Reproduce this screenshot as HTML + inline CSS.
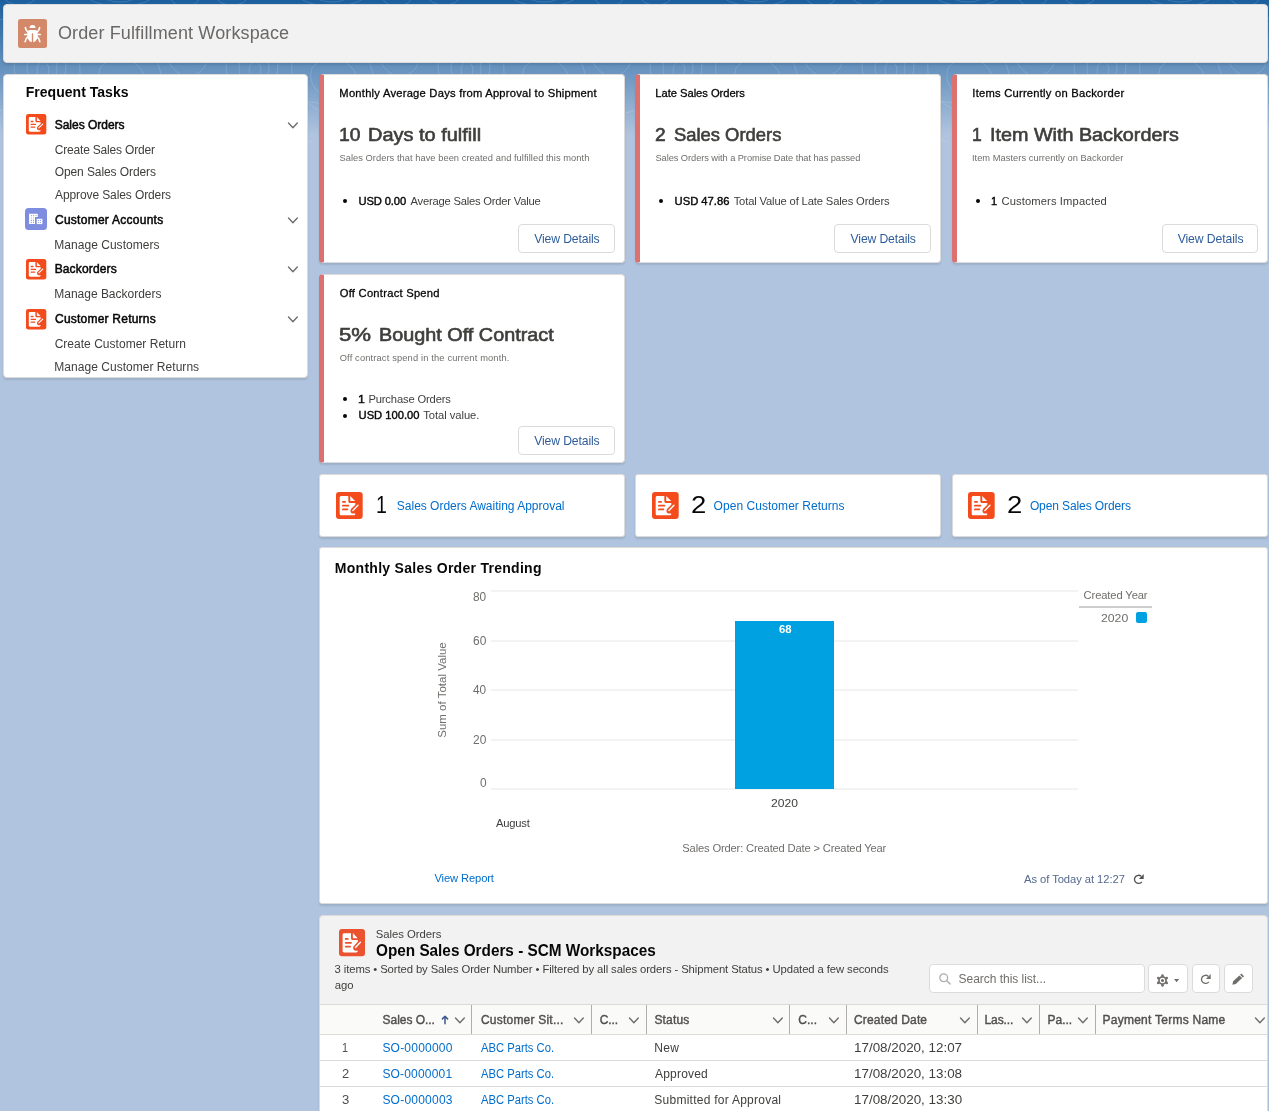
<!DOCTYPE html>
<html lang="en">
<head>
<meta charset="utf-8">
<title>Order Fulfillment Workspace</title>
<style>
*{box-sizing:border-box;margin:0;padding:0}
html,body{width:1269px;height:1111px;overflow:hidden}
body{will-change:transform;font-family:"Liberation Sans",Arial,sans-serif;font-size:12px;color:#080707;background:#b0c4df;position:relative}
.bg{position:absolute;left:0;top:0;width:1269px;height:170px;overflow:hidden;background:linear-gradient(to bottom,#1b5f9e 0,#b0c4df 135px)}
.topo{-webkit-mask-image:linear-gradient(to bottom,#000 0,#000 80%,transparent 100%);mask-image:linear-gradient(to bottom,#000 0,#000 80%,transparent 100%)}
a{text-decoration:none}
h1,h2,h3,p,b,span{font-weight:400;font-style:normal}
i{font-style:normal;display:block;position:absolute}
.t{position:absolute;white-space:nowrap;transform-origin:0 50%;display:block}
svg{position:absolute;display:block;overflow:visible}
.card{position:absolute;background:#fff;border-radius:4px;box-shadow:0 2px 2px 0 rgba(0,0,0,.10);border:1px solid #dddbda}
#hdr{background:#f3f2f2}
#hdr .ico{left:14px;top:14px;width:29px;height:29px}
.kpi{border-left:5px solid #dd716f}
.kpi .dot{width:4px;height:4px;border-radius:50%;background:#080707}
.kpi .btn{position:absolute;width:97px;height:29px;border:1px solid #dddbda;border-radius:4px;background:#fff}
#chart .g{left:171px;width:587px;height:2px;background:#f3f3f3}
#chart .bar{left:415px;top:73px;width:99px;height:168px;background:#00a1e0}
#chart .yt{left:61.6px;top:135px;width:120px;text-align:center;font-size:11.500px;line-height:14px;color:#706e6b;transform:rotate(-90deg);transform-origin:50% 50%}
#chart .lgl{left:759px;top:58px;width:73px;height:2px;background:#cfcdcb}
#chart .lgs{left:816px;top:64.4px;width:11px;height:11px;border-radius:2px;background:#00a1e0}
#list{background:#f3f2f2;border-bottom-left-radius:0;border-bottom-right-radius:0;overflow:hidden}
#list .search{position:absolute;border:1px solid #dddbda;border-radius:4px;background:#fff}
#list .ib{position:absolute;top:48px;height:29px;border:1px solid #dddbda;border-radius:4px;background:#fff}
#list .thead{position:absolute;left:0;width:947px;height:31px;background:#fafaf9;border-top:1px solid #dddbda;border-bottom:1px solid #dddbda}
#list .row{position:absolute;left:0;width:947px;height:26px;background:#fff;border-bottom:1px solid #dddbda}
#list .sep{top:89px;width:1px;height:29px;background:#b0adab}
.tile{border-radius:3px}
#chart{border-radius:3px}

</style>
</head>
<body>
<div class="bg"><svg class="topo" width="1269" height="170" viewBox="0 0 1269 170"><g fill="none" stroke="#fff" stroke-width="1" stroke-opacity=".15"><g transform="translate(0 0)"><ellipse cx="40" cy="66" rx="26" ry="30"/><ellipse cx="42" cy="68" rx="15" ry="18"/><ellipse cx="43" cy="70" rx="6" ry="8"/><ellipse cx="120" cy="-6" rx="34" ry="12"/><ellipse cx="120" cy="-8" rx="20" ry="10"/><ellipse cx="20" cy="-4" rx="16" ry="9"/><ellipse cx="185" cy="-2" rx="14" ry="8"/><path d="M0 20c30-14 60 10 90-4s60-18 122 4M0 110c40 12 70-16 110-6s70 18 102 6M80 60c14-20 50-24 70-6s12 50-14 58-60-12-56-52zM100 68c10-12 30-12 40 0s4 28-12 30-34-10-28-30zM170 40c12-10 30-6 36 8s-6 30-20 28-26-22-16-36zM150 5c20 10 40 8 62 0M10 140c30-12 60-8 90 2"/></g><g transform="translate(212 0)"><ellipse cx="40" cy="66" rx="26" ry="30"/><ellipse cx="42" cy="68" rx="15" ry="18"/><ellipse cx="43" cy="70" rx="6" ry="8"/><ellipse cx="120" cy="-6" rx="34" ry="12"/><ellipse cx="120" cy="-8" rx="20" ry="10"/><ellipse cx="20" cy="-4" rx="16" ry="9"/><ellipse cx="185" cy="-2" rx="14" ry="8"/><path d="M0 20c30-14 60 10 90-4s60-18 122 4M0 110c40 12 70-16 110-6s70 18 102 6M80 60c14-20 50-24 70-6s12 50-14 58-60-12-56-52zM100 68c10-12 30-12 40 0s4 28-12 30-34-10-28-30zM170 40c12-10 30-6 36 8s-6 30-20 28-26-22-16-36zM150 5c20 10 40 8 62 0M10 140c30-12 60-8 90 2"/></g><g transform="translate(424 0)"><ellipse cx="40" cy="66" rx="26" ry="30"/><ellipse cx="42" cy="68" rx="15" ry="18"/><ellipse cx="43" cy="70" rx="6" ry="8"/><ellipse cx="120" cy="-6" rx="34" ry="12"/><ellipse cx="120" cy="-8" rx="20" ry="10"/><ellipse cx="20" cy="-4" rx="16" ry="9"/><ellipse cx="185" cy="-2" rx="14" ry="8"/><path d="M0 20c30-14 60 10 90-4s60-18 122 4M0 110c40 12 70-16 110-6s70 18 102 6M80 60c14-20 50-24 70-6s12 50-14 58-60-12-56-52zM100 68c10-12 30-12 40 0s4 28-12 30-34-10-28-30zM170 40c12-10 30-6 36 8s-6 30-20 28-26-22-16-36zM150 5c20 10 40 8 62 0M10 140c30-12 60-8 90 2"/></g><g transform="translate(636 0)"><ellipse cx="40" cy="66" rx="26" ry="30"/><ellipse cx="42" cy="68" rx="15" ry="18"/><ellipse cx="43" cy="70" rx="6" ry="8"/><ellipse cx="120" cy="-6" rx="34" ry="12"/><ellipse cx="120" cy="-8" rx="20" ry="10"/><ellipse cx="20" cy="-4" rx="16" ry="9"/><ellipse cx="185" cy="-2" rx="14" ry="8"/><path d="M0 20c30-14 60 10 90-4s60-18 122 4M0 110c40 12 70-16 110-6s70 18 102 6M80 60c14-20 50-24 70-6s12 50-14 58-60-12-56-52zM100 68c10-12 30-12 40 0s4 28-12 30-34-10-28-30zM170 40c12-10 30-6 36 8s-6 30-20 28-26-22-16-36zM150 5c20 10 40 8 62 0M10 140c30-12 60-8 90 2"/></g><g transform="translate(848 0)"><ellipse cx="40" cy="66" rx="26" ry="30"/><ellipse cx="42" cy="68" rx="15" ry="18"/><ellipse cx="43" cy="70" rx="6" ry="8"/><ellipse cx="120" cy="-6" rx="34" ry="12"/><ellipse cx="120" cy="-8" rx="20" ry="10"/><ellipse cx="20" cy="-4" rx="16" ry="9"/><ellipse cx="185" cy="-2" rx="14" ry="8"/><path d="M0 20c30-14 60 10 90-4s60-18 122 4M0 110c40 12 70-16 110-6s70 18 102 6M80 60c14-20 50-24 70-6s12 50-14 58-60-12-56-52zM100 68c10-12 30-12 40 0s4 28-12 30-34-10-28-30zM170 40c12-10 30-6 36 8s-6 30-20 28-26-22-16-36zM150 5c20 10 40 8 62 0M10 140c30-12 60-8 90 2"/></g><g transform="translate(1060 0)"><ellipse cx="40" cy="66" rx="26" ry="30"/><ellipse cx="42" cy="68" rx="15" ry="18"/><ellipse cx="43" cy="70" rx="6" ry="8"/><ellipse cx="120" cy="-6" rx="34" ry="12"/><ellipse cx="120" cy="-8" rx="20" ry="10"/><ellipse cx="20" cy="-4" rx="16" ry="9"/><ellipse cx="185" cy="-2" rx="14" ry="8"/><path d="M0 20c30-14 60 10 90-4s60-18 122 4M0 110c40 12 70-16 110-6s70 18 102 6M80 60c14-20 50-24 70-6s12 50-14 58-60-12-56-52zM100 68c10-12 30-12 40 0s4 28-12 30-34-10-28-30zM170 40c12-10 30-6 36 8s-6 30-20 28-26-22-16-36zM150 5c20 10 40 8 62 0M10 140c30-12 60-8 90 2"/></g></g></svg></div>
<header class="card" id="hdr" style="left:3px;top:4px;width:1265px;height:59px">
  <svg class="ico" viewBox="0 0 29 29"><rect width="29" height="29" rx="2.500" fill="#d4886a"/><path fill="#fff" d="M11.500 9.100a3 3.200 0 0 1 6 0z"/><path fill="#fff" d="M9.400 13.500c0-1.500 1.100-2.500 2.600-2.500h5c1.500 0 2.600 1 2.600 2.500v3.700c0 2.800-1.700 5.300-4.400 6.100V14.900c0-.4-.3-.7-.7-.7s-.7.300-.7.700v8.400c-2.700-.8-4.400-3.300-4.400-6.100z"/><path fill="none" stroke="#fff" stroke-width="1.700" stroke-linecap="round" d="M9.900 13C8.300 11.900 7.500 10.300 7.400 8.500M19.100 13c1.600-1.100 2.400-2.700 2.500-4.500M9.400 15.500H6.800M19.600 15.500h2.600M9.900 18c-1.700 1-2.600 2.600-2.700 4.600M19.100 18c1.700 1 2.600 2.600 2.700 4.600"/></svg>
  <h1 class="t" style="top:16.90px;font-size:18px;line-height:23px;color:#6a6866;left:53.90px;letter-spacing:0.135px;">Order Fulfillment Workspace</h1>
</header>
<nav class="card" id="left" style="left:3px;top:74px;width:305px;height:304px">
  <h2 class="t" style="top:8.20px;font-size:14px;line-height:18px;font-weight:700;color:#080707;left:21.70px;letter-spacing:0.030px;">Frequent Tasks</h2>
  <svg class="ic" style="left:22.0px;top:38.8px;width:20.3px;height:20.5px" viewBox="0 0 26 27" preserveAspectRatio="none"><rect width="26" height="27" rx="3" fill="#f44b1c"/><path fill="#fff" d="M5.2 4.1h6.8v5.100c0 1 .8 1.800 1.800 1.800h5v1.700l-3.700 3.900c-1 1-1.200 2.300-.8 3.300c.4 1 1.300 1.600 2.400 1.600h2.100v.2c0 .9-.7 1.600-1.600 1.600H5.200c-.9 0-1.600-.7-1.600-1.600V5.700c0-.9.7-1.600 1.600-1.600z"/><path fill="#fff" d="M13.900 4l4.700 5.100h-4c-.4 0-.7-.3-.7-.7z"/><path stroke="#f44b1c" stroke-width="1.700" stroke-linecap="round" d="M6.700 9.900h2.200M6.700 13.700h5.400M6.700 17.400h4.400"/><path d="M16.500 18.400l4.900-5.200" stroke="#fff" stroke-width="1.400" stroke-linecap="round" fill="none"/></svg>
  <h3 class="t" style="top:42.00px;font-size:12px;line-height:16px;color:#080707;-webkit-text-stroke:0.5px #080707;left:50.65px;letter-spacing:-0.007px;">Sales Orders</h3>
  <svg class="chev" style="left:283.1px;top:47.0px" width="12" height="8" viewBox="0 0 12 8"><path d="M1.500 1.100l4.400 4.600 4.400-4.600" fill="none" stroke="#706e6b" stroke-width="1.400" stroke-linecap="round" stroke-linejoin="round"/></svg>
  <a class="t" style="top:67.20px;font-size:12px;line-height:16px;color:#3e3e3c;left:50.66px;letter-spacing:-0.174px;">Create Sales Order</a>
  <a class="t" style="top:89.10px;font-size:12px;line-height:16px;color:#3e3e3c;left:50.70px;letter-spacing:-0.089px;">Open Sales Orders</a>
  <a class="t" style="top:112.00px;font-size:12px;line-height:16px;color:#3e3e3c;left:51.06px;letter-spacing:-0.107px;">Approve Sales Orders</a>
  <svg class="ic" style="left:21px;top:133.0px;width:22px;height:22px" viewBox="0 0 22 22" preserveAspectRatio="none"><rect width="22" height="22" rx="3.500" fill="#7f8de1"/><path fill="#fff" d="M4.100 5.800h8.700v3.200h-2.800v7.100H4.100z"/><rect x="11.700" y="10.800" width="5.700" height="5.300" fill="#fff"/><g fill="#7f8de1"><circle cx="6.300" cy="7.500" r=".55"/><circle cx="8.400" cy="7.500" r=".55"/><circle cx="11.100" cy="7.500" r=".55"/><circle cx="6.300" cy="12.400" r=".55"/><circle cx="8.400" cy="12.400" r=".55"/><circle cx="6.300" cy="14.400" r=".55"/><circle cx="8.400" cy="14.400" r=".55"/><circle cx="13.300" cy="12.400" r=".55"/><circle cx="15.400" cy="12.400" r=".55"/><circle cx="13.300" cy="14.500" r=".55"/><circle cx="15.400" cy="14.500" r=".55"/><rect x="6" y="8.500" width=".6" height="3" opacity=".5"/><rect x="8.100" y="8.500" width=".6" height="3" opacity=".5"/></g></svg>
  <h3 class="t" style="top:136.80px;font-size:12px;line-height:16px;color:#080707;-webkit-text-stroke:0.5px #080707;left:51.01px;letter-spacing:0.257px;">Customer Accounts</h3>
  <svg class="chev" style="left:283.1px;top:141.8px" width="12" height="8" viewBox="0 0 12 8"><path d="M1.500 1.100l4.400 4.600 4.400-4.600" fill="none" stroke="#706e6b" stroke-width="1.400" stroke-linecap="round" stroke-linejoin="round"/></svg>
  <a class="t" style="top:162.10px;font-size:12px;line-height:16px;color:#3e3e3c;left:50.30px;letter-spacing:0.031px;">Manage Customers</a>
  <svg class="ic" style="left:22.0px;top:183.7px;width:20.3px;height:20.5px" viewBox="0 0 26 27" preserveAspectRatio="none"><rect width="26" height="27" rx="3" fill="#f44b1c"/><path fill="#fff" d="M5.2 4.1h6.8v5.100c0 1 .8 1.800 1.800 1.800h5v1.700l-3.700 3.900c-1 1-1.200 2.300-.8 3.300c.4 1 1.300 1.600 2.400 1.600h2.100v.2c0 .9-.7 1.600-1.600 1.600H5.200c-.9 0-1.600-.7-1.600-1.600V5.700c0-.9.7-1.600 1.600-1.600z"/><path fill="#fff" d="M13.900 4l4.700 5.100h-4c-.4 0-.7-.3-.7-.7z"/><path stroke="#f44b1c" stroke-width="1.700" stroke-linecap="round" d="M6.700 9.900h2.200M6.700 13.700h5.400M6.700 17.400h4.400"/><path d="M16.500 18.400l4.900-5.200" stroke="#fff" stroke-width="1.400" stroke-linecap="round" fill="none"/></svg>
  <h3 class="t" style="top:186.10px;font-size:12px;line-height:16px;color:#080707;-webkit-text-stroke:0.5px #080707;left:50.65px;letter-spacing:0.152px;">Backorders</h3>
  <svg class="chev" style="left:283.1px;top:191.1px" width="12" height="8" viewBox="0 0 12 8"><path d="M1.500 1.100l4.400 4.600 4.400-4.600" fill="none" stroke="#706e6b" stroke-width="1.400" stroke-linecap="round" stroke-linejoin="round"/></svg>
  <a class="t" style="top:210.80px;font-size:12px;line-height:16px;color:#3e3e3c;left:50.30px;letter-spacing:-0.016px;">Manage Backorders</a>
  <svg class="ic" style="left:22.0px;top:233.5px;width:20.3px;height:20.5px" viewBox="0 0 26 27" preserveAspectRatio="none"><rect width="26" height="27" rx="3" fill="#f44b1c"/><path fill="#fff" d="M5.2 4.1h6.8v5.100c0 1 .8 1.800 1.800 1.800h5v1.700l-3.700 3.900c-1 1-1.200 2.300-.8 3.300c.4 1 1.300 1.600 2.400 1.600h2.100v.2c0 .9-.7 1.600-1.600 1.600H5.200c-.9 0-1.600-.7-1.600-1.600V5.700c0-.9.7-1.600 1.600-1.600z"/><path fill="#fff" d="M13.900 4l4.700 5.100h-4c-.4 0-.7-.3-.7-.7z"/><path stroke="#f44b1c" stroke-width="1.700" stroke-linecap="round" d="M6.700 9.900h2.200M6.700 13.700h5.400M6.700 17.400h4.400"/><path d="M16.500 18.400l4.900-5.200" stroke="#fff" stroke-width="1.400" stroke-linecap="round" fill="none"/></svg>
  <h3 class="t" style="top:236.00px;font-size:12px;line-height:16px;color:#080707;-webkit-text-stroke:0.5px #080707;left:51.01px;letter-spacing:0.222px;">Customer Returns</h3>
  <svg class="chev" style="left:283.1px;top:241.0px" width="12" height="8" viewBox="0 0 12 8"><path d="M1.500 1.100l4.400 4.600 4.400-4.600" fill="none" stroke="#706e6b" stroke-width="1.400" stroke-linecap="round" stroke-linejoin="round"/></svg>
  <a class="t" style="top:261.00px;font-size:12px;line-height:16px;color:#3e3e3c;left:50.66px;letter-spacing:0.023px;">Create Customer Return</a>
  <a class="t" style="top:284.00px;font-size:12px;line-height:16px;color:#3e3e3c;left:50.30px;letter-spacing:0.033px;">Manage Customer Returns</a>
</nav>
<section class="card kpi" style="left:319px;top:74px;width:306px;height:189px">
  <h2 class="t" style="top:11.00px;font-size:11.2px;line-height:15px;color:#080707;-webkit-text-stroke:0.3px #080707;left:15.35px;letter-spacing:0.236px;">Monthly Average Days from Approval to Shipment</h2>
  <span class="t" style="top:48.00px;font-size:18.2px;line-height:24px;color:#3e3e3c;-webkit-text-stroke:0.6px #3e3e3c;left:15.03px;transform:scaleX(1.0609);">10</span>
  <span class="t" style="top:48.00px;font-size:18.2px;line-height:24px;color:#3e3e3c;-webkit-text-stroke:0.6px #3e3e3c;left:44.19px;transform:scaleX(1.0970);">Days to fulfill</span>
  <p class="t" style="top:77.00px;font-size:9.3px;line-height:12px;color:#706e6b;left:15.44px;letter-spacing:0.048px;">Sales Orders that have been created and fulfilled this month</p>
  <i class="dot" style="left:19.4px;top:124.2px"></i>
  <b class="t" style="top:118.70px;font-size:11.2px;line-height:15px;color:#080707;-webkit-text-stroke:0.4px #080707;left:34.55px;letter-spacing:-0.132px;">USD 0.00</b>
  <span class="t" style="top:118.70px;font-size:11.2px;line-height:15px;color:#3e3e3c;left:86.46px;letter-spacing:-0.205px;">Average Sales Order Value</span>
  <span class="btn" style="left:194px;top:149px"></span>
  <a class="t" style="top:155.60px;font-size:12.2px;line-height:16px;color:#2f5d9b;left:210.14px;letter-spacing:-0.115px;">View Details</a>
</section>
<section class="card kpi" style="left:635px;top:74px;width:306px;height:189px">
  <h2 class="t" style="top:11.00px;font-size:11.2px;line-height:15px;color:#080707;-webkit-text-stroke:0.3px #080707;left:15.34px;letter-spacing:-0.037px;">Late Sales Orders</h2>
  <span class="t" style="top:48.00px;font-size:18.2px;line-height:24px;color:#3e3e3c;-webkit-text-stroke:0.6px #3e3e3c;left:15.46px;transform:scaleX(1.0563);">2</span>
  <span class="t" style="top:48.00px;font-size:18.2px;line-height:24px;color:#3e3e3c;-webkit-text-stroke:0.6px #3e3e3c;left:33.95px;transform:scaleX(1.0112);">Sales Orders</span>
  <p class="t" style="top:77.00px;font-size:9.3px;line-height:12px;color:#706e6b;left:15.44px;letter-spacing:-0.070px;">Sales Orders with a Promise Date that has passed</p>
  <i class="dot" style="left:19.4px;top:124.2px"></i>
  <b class="t" style="top:118.70px;font-size:11.2px;line-height:15px;color:#080707;-webkit-text-stroke:0.4px #080707;left:34.55px;letter-spacing:0.020px;">USD 47.86</b>
  <span class="t" style="top:118.70px;font-size:11.2px;line-height:15px;color:#3e3e3c;left:93.65px;letter-spacing:-0.139px;">Total Value of Late Sales Orders</span>
  <span class="btn" style="left:194px;top:149px"></span>
  <a class="t" style="top:155.60px;font-size:12.2px;line-height:16px;color:#2f5d9b;left:210.54px;letter-spacing:-0.133px;">View Details</a>
</section>
<section class="card kpi" style="left:952px;top:74px;width:316px;height:189px">
  <h2 class="t" style="top:11.00px;font-size:11.2px;line-height:15px;color:#080707;-webkit-text-stroke:0.3px #080707;left:15.30px;letter-spacing:0.234px;">Items Currently on Backorder</h2>
  <span class="t" style="top:48.00px;font-size:18.2px;line-height:24px;color:#3e3e3c;-webkit-text-stroke:0.6px #3e3e3c;left:15.14px;transform:scaleX(0.9607);">1</span>
  <span class="t" style="top:48.00px;font-size:18.2px;line-height:24px;color:#3e3e3c;-webkit-text-stroke:0.6px #3e3e3c;left:32.70px;transform:scaleX(1.0865);">Item With Backorders</span>
  <p class="t" style="top:77.00px;font-size:9.3px;line-height:12px;color:#706e6b;left:14.90px;letter-spacing:0.047px;">Item Masters currently on Backorder</p>
  <i class="dot" style="left:19.4px;top:124.2px"></i>
  <b class="t" style="top:118.70px;font-size:11.2px;line-height:15px;color:#080707;-webkit-text-stroke:0.4px #080707;left:34.34px;transform:scaleX(0.9932);">1</b>
  <span class="t" style="top:118.70px;font-size:11.2px;line-height:15px;color:#3e3e3c;left:44.48px;letter-spacing:0.121px;">Customers Impacted</span>
  <span class="btn" style="left:205px;top:149px;width:96px"></span>
  <a class="t" style="top:155.60px;font-size:12.2px;line-height:16px;color:#2f5d9b;left:220.64px;letter-spacing:-0.088px;">View Details</a>
</section>
<section class="card kpi" style="left:319px;top:274px;width:306px;height:189px">
  <h2 class="t" style="top:11.00px;font-size:11.2px;line-height:15px;color:#080707;-webkit-text-stroke:0.3px #080707;left:15.77px;letter-spacing:0.246px;">Off Contract Spend</h2>
  <span class="t" style="top:48.00px;font-size:18.2px;line-height:24px;color:#3e3e3c;-webkit-text-stroke:0.6px #3e3e3c;left:15.33px;transform:scaleX(1.2219);">5%</span>
  <span class="t" style="top:48.00px;font-size:18.2px;line-height:24px;color:#3e3e3c;-webkit-text-stroke:0.6px #3e3e3c;left:55.20px;transform:scaleX(1.0892);">Bought Off Contract</span>
  <p class="t" style="top:77.00px;font-size:9.3px;line-height:12px;color:#706e6b;left:15.68px;letter-spacing:0.154px;">Off contract spend in the current month.</p>
  <i class="dot" style="left:19.4px;top:122.4px"></i>
  <b class="t" style="top:116.90px;font-size:11.2px;line-height:15px;color:#080707;-webkit-text-stroke:0.4px #080707;left:34.23px;transform:scaleX(1.1012);">1</b>
  <span class="t" style="top:116.90px;font-size:11.2px;line-height:15px;color:#3e3e3c;left:44.40px;letter-spacing:-0.145px;">Purchase Orders</span>
  <i class="dot" style="left:19.4px;top:138.6px"></i>
  <b class="t" style="top:133.10px;font-size:11.2px;line-height:15px;color:#080707;-webkit-text-stroke:0.4px #080707;left:34.55px;">USD 100.00</b>
  <span class="t" style="top:133.10px;font-size:11.2px;line-height:15px;color:#3e3e3c;left:99.25px;letter-spacing:-0.039px;">Total value.</span>
  <span class="btn" style="left:194px;top:151px"></span>
  <a class="t" style="top:157.60px;font-size:12.2px;line-height:16px;color:#2f5d9b;left:210.14px;letter-spacing:-0.115px;">View Details</a>
</section>
<section class="card tile" style="left:319px;top:474px;width:306px;height:63px">
  <svg class="ic" style="left:16.1px;top:17.0px;width:26.7px;height:27px" viewBox="0 0 26 27" preserveAspectRatio="none"><rect width="26" height="27" rx="3" fill="#f44b1c"/><path fill="#fff" d="M5.2 4.1h6.8v5.100c0 1 .8 1.800 1.800 1.800h5v1.700l-3.700 3.900c-1 1-1.200 2.300-.8 3.300c.4 1 1.300 1.600 2.400 1.600h2.100v.2c0 .9-.7 1.600-1.600 1.600H5.200c-.9 0-1.600-.7-1.600-1.600V5.700c0-.9.7-1.600 1.600-1.600z"/><path fill="#fff" d="M13.900 4l4.700 5.100h-4c-.4 0-.7-.3-.7-.7z"/><path stroke="#f44b1c" stroke-width="1.700" stroke-linecap="round" d="M6.700 9.900h2.200M6.700 13.700h5.400M6.700 17.400h4.400"/><path d="M16.500 18.400l4.900-5.200" stroke="#fff" stroke-width="1.400" stroke-linecap="round" fill="none"/></svg>
  <span class="t" style="top:14.00px;font-size:24.5px;line-height:32px;color:#080707;left:55.61px;transform:scaleX(0.7969);">1</span>
  <a class="t" style="top:22.60px;font-size:12px;line-height:16px;color:#006dcc;left:76.80px;letter-spacing:-0.005px;">Sales Orders Awaiting Approval</a>
</section>
<section class="card tile" style="left:635px;top:474px;width:306px;height:63px">
  <svg class="ic" style="left:16.1px;top:17.0px;width:26.7px;height:27px" viewBox="0 0 26 27" preserveAspectRatio="none"><rect width="26" height="27" rx="3" fill="#f44b1c"/><path fill="#fff" d="M5.2 4.1h6.8v5.100c0 1 .8 1.800 1.800 1.800h5v1.700l-3.700 3.900c-1 1-1.200 2.300-.8 3.300c.4 1 1.300 1.600 2.400 1.600h2.100v.2c0 .9-.7 1.600-1.600 1.600H5.200c-.9 0-1.600-.7-1.600-1.600V5.700c0-.9.7-1.600 1.600-1.600z"/><path fill="#fff" d="M13.900 4l4.700 5.100h-4c-.4 0-.7-.3-.7-.7z"/><path stroke="#f44b1c" stroke-width="1.700" stroke-linecap="round" d="M6.700 9.900h2.200M6.700 13.700h5.400M6.700 17.400h4.400"/><path d="M16.500 18.400l4.900-5.200" stroke="#fff" stroke-width="1.400" stroke-linecap="round" fill="none"/></svg>
  <span class="t" style="top:14.00px;font-size:24.5px;line-height:32px;color:#080707;left:54.59px;transform:scaleX(1.1232);">2</span>
  <a class="t" style="top:22.60px;font-size:12px;line-height:16px;color:#006dcc;left:77.60px;letter-spacing:0.046px;">Open Customer Returns</a>
</section>
<section class="card tile" style="left:952px;top:474px;width:316px;height:63px">
  <svg class="ic" style="left:15.2px;top:17.0px;width:26.7px;height:27px" viewBox="0 0 26 27" preserveAspectRatio="none"><rect width="26" height="27" rx="3" fill="#f44b1c"/><path fill="#fff" d="M5.2 4.1h6.8v5.100c0 1 .8 1.800 1.800 1.800h5v1.700l-3.700 3.900c-1 1-1.200 2.300-.8 3.300c.4 1 1.300 1.600 2.400 1.600h2.100v.2c0 .9-.7 1.600-1.600 1.600H5.200c-.9 0-1.600-.7-1.600-1.600V5.700c0-.9.7-1.600 1.600-1.600z"/><path fill="#fff" d="M13.900 4l4.700 5.100h-4c-.4 0-.7-.3-.7-.7z"/><path stroke="#f44b1c" stroke-width="1.700" stroke-linecap="round" d="M6.700 9.900h2.200M6.700 13.700h5.400M6.700 17.400h4.400"/><path d="M16.500 18.400l4.900-5.200" stroke="#fff" stroke-width="1.400" stroke-linecap="round" fill="none"/></svg>
  <span class="t" style="top:14.00px;font-size:24.5px;line-height:32px;color:#080707;left:53.99px;transform:scaleX(1.1232);">2</span>
  <a class="t" style="top:22.60px;font-size:12px;line-height:16px;color:#006dcc;left:76.90px;letter-spacing:-0.102px;">Open Sales Orders</a>
</section>
<section class="card" id="chart" style="left:319px;top:547px;width:949px;height:357px">
  <h2 class="t" style="top:11.30px;font-size:14px;line-height:18px;font-weight:700;color:#080707;left:14.80px;letter-spacing:0.278px;">Monthly Sales Order Trending</h2>
  <i class="g" style="top:42px"></i>
  <i class="g" style="top:92px"></i>
  <i class="g" style="top:141px"></i>
  <i class="g" style="top:191px"></i>
  <i class="g" style="top:240px"></i>
  <span class="t" style="top:40.60px;font-size:12px;line-height:16px;color:#706e6b;left:153.23px;transform:scaleX(0.9889);">80</span>
  <span class="t" style="top:84.60px;font-size:12px;line-height:16px;color:#706e6b;left:153.16px;transform:scaleX(0.9949);">60</span>
  <span class="t" style="top:134.20px;font-size:12px;line-height:16px;color:#706e6b;left:153.31px;transform:scaleX(0.9832);">40</span>
  <span class="t" style="top:183.80px;font-size:12px;line-height:16px;color:#706e6b;left:153.18px;transform:scaleX(0.9933);">20</span>
  <span class="t" style="top:227.30px;font-size:12px;line-height:16px;color:#706e6b;left:160.10px;transform:scaleX(0.9921);">0</span>
  <span class="t yt">Sum of Total Value</span>
  <i class="bar"></i>
  <span class="t" style="top:74.20px;font-size:11px;line-height:14px;font-weight:700;color:#fff;left:458.74px;transform:scaleX(1.0292);">68</span>
  <span class="t" style="top:247.70px;font-size:11.5px;line-height:15px;color:#3e3e3c;left:451.36px;transform:scaleX(1.0519);">2020</span>
  <span class="t" style="top:268.10px;font-size:11.2px;line-height:15px;color:#3e3e3c;left:176.06px;letter-spacing:-0.207px;">August</span>
  <span class="t" style="top:292.80px;font-size:11.2px;line-height:15px;color:#706e6b;left:362.33px;letter-spacing:-0.168px;">Sales Order: Created Date &gt; Created Year</span>
  <span class="t" style="top:39.80px;font-size:11.2px;line-height:15px;color:#706e6b;left:763.58px;letter-spacing:-0.119px;">Created Year</span>
  <i class="lgl"></i>
  <span class="t" style="top:62.70px;font-size:11.5px;line-height:15px;color:#706e6b;left:781.26px;transform:scaleX(1.0642);">2020</span>
  <i class="lgs"></i>
  <a class="t" style="top:323.10px;font-size:11.2px;line-height:15px;color:#006dcc;left:114.43px;letter-spacing:-0.121px;">View Report</a>
  <span class="t" style="top:323.90px;font-size:11.2px;line-height:15px;color:#54698d;left:704.06px;letter-spacing:-0.050px;">As of Today at 12:27</span>
  <svg class="rf" style="left:813.1px;top:325.7px" width="12" height="11" viewBox="0 0 12 11"><path d="M8.800 7.900A4.100 4.100 0 1 1 8.200 2.200" fill="none" stroke="#514f4d" stroke-width="1.300"/><path d="M10.700.1v4.800H5.900z" fill="#514f4d"/></svg>
</section>
<section class="card" id="list" style="left:319px;top:915px;width:949px;height:210px">
  <svg class="ic" style="left:19.0px;top:13.4px;width:26px;height:27.2px" viewBox="0 0 26 27" preserveAspectRatio="none"><rect width="26" height="27" rx="3" fill="#ea5230"/><path fill="#fff" d="M5.2 4.1h6.8v5.100c0 1 .8 1.800 1.800 1.800h5v1.700l-3.700 3.900c-1 1-1.200 2.300-.8 3.300c.4 1 1.300 1.600 2.400 1.600h2.100v.2c0 .9-.7 1.600-1.600 1.600H5.200c-.9 0-1.600-.7-1.600-1.600V5.700c0-.9.7-1.600 1.600-1.600z"/><path fill="#fff" d="M13.900 4l4.700 5.100h-4c-.4 0-.7-.3-.7-.7z"/><path stroke="#ea5230" stroke-width="1.700" stroke-linecap="round" d="M6.700 9.900h2.200M6.700 13.700h5.400M6.700 17.400h4.400"/><path d="M16.500 18.400l4.900-5.200" stroke="#fff" stroke-width="1.400" stroke-linecap="round" fill="none"/></svg>
  <p class="t" style="top:11.40px;font-size:11.3px;line-height:15px;color:#3e3e3c;left:55.84px;letter-spacing:-0.022px;">Sales Orders</p>
  <h2 class="t" style="top:24.60px;font-size:15.6px;line-height:20px;font-weight:700;color:#080707;left:56.41px;transform:scale(0.9820,1.09);">Open Sales Orders - SCM Workspaces</h2>
  <p class="t" style="top:46.00px;font-size:11.3px;line-height:15px;color:#3e3e3c;left:14.54px;letter-spacing:-0.100px;">3 items • Sorted by Sales Order Number • Filtered by all sales orders - Shipment Status • Updated a few seconds</p>
  <p class="t" style="top:62.00px;font-size:11.3px;line-height:15px;color:#3e3e3c;left:14.65px;letter-spacing:0.051px;">ago</p>
  <div class="search" style="left:609px;top:48px;width:216px;height:29px"><svg width="12" height="12" viewBox="0 0 12 12" style="left:9.4px;top:7.5px"><circle cx="4.700" cy="4.700" r="3.900" fill="none" stroke="#b0adab" stroke-width="1.300"/><path d="M7.600 7.600l3.600 3.500" stroke="#b0adab" stroke-width="1.400" stroke-linecap="round"/></svg></div>
  <span class="t" style="top:55.00px;font-size:12px;line-height:16px;color:#706e6b;left:638.60px;letter-spacing:-0.032px;">Search this list...</span>
  <div class="ib" style="left:828px;width:40px"><svg width="13" height="13" viewBox="-6.5 -6.5 13 13" style="left:6.6px;top:8.9px"><g fill="#706e6b"><circle r="4.4"/><circle cx="0.00" cy="-4.85" r="1.35"/><circle cx="-4.20" cy="-2.42" r="1.35"/><circle cx="-4.20" cy="2.43" r="1.35"/><circle cx="-0.00" cy="4.85" r="1.35"/><circle cx="4.20" cy="2.43" r="1.35"/><circle cx="4.20" cy="-2.42" r="1.35"/></g><circle r="2.7" fill="#fff"/><circle r="1.55" fill="#706e6b"/></svg><svg width="6" height="4" viewBox="0 0 6 4" style="left:25px;top:14px"><path d="M0 0h5.200L2.600 3.200z" fill="#706e6b"/></svg></div>
  <div class="ib" style="left:872px;width:28px"><svg width="12" height="11" viewBox="0 0 12 11" style="left:6.7px;top:8.6px"><path d="M8.800 7.900A4.100 4.100 0 1 1 8.200 2.200" fill="none" stroke="#706e6b" stroke-width="1.300"/><path d="M10.700.1v4.800H5.900z" fill="#706e6b"/></svg></div>
  <div class="ib" style="left:904px;width:29px"><svg width="13" height="12" viewBox="0 0 13 12" style="left:7.4px;top:7.8px"><path d="M9.300.5l2.700 2.700-1.200 1.200-2.700-2.700zM7.400 2.400l2.700 2.700-6.300 5.900L.4 11.700l.7-3.400z" fill="#706e6b"/></svg></div>
  <div class="thead" style="top:88px"></div>
  <i class="sep" style="left:151.0px"></i>
  <i class="sep" style="left:270.8px"></i>
  <i class="sep" style="left:325.9px"></i>
  <i class="sep" style="left:468.9px"></i>
  <i class="sep" style="left:525.9px"></i>
  <i class="sep" style="left:656.9px"></i>
  <i class="sep" style="left:718.9px"></i>
  <i class="sep" style="left:774.9px"></i>
  <b class="t" style="top:96.30px;font-size:12px;line-height:16px;color:#514f4d;-webkit-text-stroke:0.4px #514f4d;left:62.60px;letter-spacing:-0.053px;">Sales O...</b>
  <svg class="chev" style="left:133.6px;top:100.8px" width="12" height="8" viewBox="0 0 12 8"><path d="M1.500 1.100l4.400 4.600 4.400-4.600" fill="none" stroke="#706e6b" stroke-width="1.400" stroke-linecap="round" stroke-linejoin="round"/></svg>
  <b class="t" style="top:96.30px;font-size:12px;line-height:16px;color:#514f4d;-webkit-text-stroke:0.4px #514f4d;left:160.96px;letter-spacing:0.215px;">Customer Sit...</b>
  <svg class="chev" style="left:253.4px;top:100.8px" width="12" height="8" viewBox="0 0 12 8"><path d="M1.500 1.100l4.400 4.600 4.400-4.600" fill="none" stroke="#706e6b" stroke-width="1.400" stroke-linecap="round" stroke-linejoin="round"/></svg>
  <b class="t" style="top:96.30px;font-size:12px;line-height:16px;color:#514f4d;-webkit-text-stroke:0.4px #514f4d;left:279.76px;letter-spacing:-0.144px;">C...</b>
  <svg class="chev" style="left:308.4px;top:100.8px" width="12" height="8" viewBox="0 0 12 8"><path d="M1.500 1.100l4.400 4.600 4.400-4.600" fill="none" stroke="#706e6b" stroke-width="1.400" stroke-linecap="round" stroke-linejoin="round"/></svg>
  <b class="t" style="top:96.30px;font-size:12px;line-height:16px;color:#514f4d;-webkit-text-stroke:0.4px #514f4d;left:334.40px;letter-spacing:0.185px;">Status</b>
  <svg class="chev" style="left:451.6px;top:100.8px" width="12" height="8" viewBox="0 0 12 8"><path d="M1.500 1.100l4.400 4.600 4.400-4.600" fill="none" stroke="#706e6b" stroke-width="1.400" stroke-linecap="round" stroke-linejoin="round"/></svg>
  <b class="t" style="top:96.30px;font-size:12px;line-height:16px;color:#514f4d;-webkit-text-stroke:0.4px #514f4d;left:478.16px;letter-spacing:0.056px;">C...</b>
  <svg class="chev" style="left:508.4px;top:100.8px" width="12" height="8" viewBox="0 0 12 8"><path d="M1.500 1.100l4.400 4.600 4.400-4.600" fill="none" stroke="#706e6b" stroke-width="1.400" stroke-linecap="round" stroke-linejoin="round"/></svg>
  <b class="t" style="top:96.30px;font-size:12px;line-height:16px;color:#514f4d;-webkit-text-stroke:0.4px #514f4d;left:534.06px;letter-spacing:0.147px;">Created Date</b>
  <svg class="chev" style="left:639.2px;top:100.8px" width="12" height="8" viewBox="0 0 12 8"><path d="M1.500 1.100l4.400 4.600 4.400-4.600" fill="none" stroke="#706e6b" stroke-width="1.400" stroke-linecap="round" stroke-linejoin="round"/></svg>
  <b class="t" style="top:96.30px;font-size:12px;line-height:16px;color:#514f4d;-webkit-text-stroke:0.4px #514f4d;left:664.50px;letter-spacing:-0.087px;">Las...</b>
  <svg class="chev" style="left:701.4px;top:100.8px" width="12" height="8" viewBox="0 0 12 8"><path d="M1.500 1.100l4.400 4.600 4.400-4.600" fill="none" stroke="#706e6b" stroke-width="1.400" stroke-linecap="round" stroke-linejoin="round"/></svg>
  <b class="t" style="top:96.30px;font-size:12px;line-height:16px;color:#514f4d;-webkit-text-stroke:0.4px #514f4d;left:727.60px;letter-spacing:-0.069px;">Pa...</b>
  <svg class="chev" style="left:757.4px;top:100.8px" width="12" height="8" viewBox="0 0 12 8"><path d="M1.500 1.100l4.400 4.600 4.400-4.600" fill="none" stroke="#706e6b" stroke-width="1.400" stroke-linecap="round" stroke-linejoin="round"/></svg>
  <b class="t" style="top:96.30px;font-size:12px;line-height:16px;color:#514f4d;-webkit-text-stroke:0.4px #514f4d;left:782.50px;letter-spacing:0.253px;">Payment Terms Name</b>
  <svg class="chev" style="left:934.4px;top:100.8px" width="12" height="8" viewBox="0 0 12 8"><path d="M1.500 1.100l4.400 4.600 4.400-4.600" fill="none" stroke="#706e6b" stroke-width="1.400" stroke-linecap="round" stroke-linejoin="round"/></svg>
  <svg class="chev" style="left:121.2px;top:98.8px" width="8" height="10" viewBox="0 0 8 10"><path d="M4 8.700V1.600M1.400 3.900l2.600-2.600 2.600 2.600" fill="none" stroke="#3b5a8e" stroke-width="1.500" stroke-linecap="round" stroke-linejoin="round"/></svg>
  <div class="row" style="top:119px"></div>
  <span class="t" style="top:124.30px;font-size:12px;line-height:16px;color:#514f4d;left:22.10px;transform:scaleX(0.9000);">1</span>
  <a class="t" style="top:124.30px;font-size:12px;line-height:16px;color:#006dcc;left:62.40px;letter-spacing:0.216px;">SO-0000000</a>
  <a class="t" style="top:124.30px;font-size:12px;line-height:16px;color:#006dcc;left:160.98px;transform:scaleX(0.9357);">ABC Parts Co.</a>
  <span class="t" style="top:124.30px;font-size:12px;line-height:16px;color:#3e3e3c;left:334.30px;letter-spacing:0.350px;">New</span>
  <span class="t" style="top:124.30px;font-size:12px;line-height:16px;color:#3e3e3c;left:533.78px;transform:scaleX(1.1168);">17/08/2020, 12:07</span>
  <div class="row" style="top:145px"></div>
  <span class="t" style="top:150.30px;font-size:12px;line-height:16px;color:#514f4d;left:21.82px;transform:scaleX(1.0796);">2</span>
  <a class="t" style="top:150.30px;font-size:12px;line-height:16px;color:#006dcc;left:62.40px;letter-spacing:0.180px;">SO-0000001</a>
  <a class="t" style="top:150.30px;font-size:12px;line-height:16px;color:#006dcc;left:160.98px;transform:scaleX(0.9357);">ABC Parts Co.</a>
  <span class="t" style="top:150.30px;font-size:12px;line-height:16px;color:#3e3e3c;left:335.06px;letter-spacing:0.191px;">Approved</span>
  <span class="t" style="top:150.30px;font-size:12px;line-height:16px;color:#3e3e3c;left:533.78px;transform:scaleX(1.1170);">17/08/2020, 13:08</span>
  <div class="row" style="top:171px"></div>
  <span class="t" style="top:176.30px;font-size:12px;line-height:16px;color:#514f4d;left:21.74px;transform:scaleX(1.0939);">3</span>
  <a class="t" style="top:176.30px;font-size:12px;line-height:16px;color:#006dcc;left:62.40px;letter-spacing:0.225px;">SO-0000003</a>
  <a class="t" style="top:176.30px;font-size:12px;line-height:16px;color:#006dcc;left:160.98px;transform:scaleX(0.9357);">ABC Parts Co.</a>
  <span class="t" style="top:176.30px;font-size:12px;line-height:16px;color:#3e3e3c;left:334.30px;letter-spacing:0.254px;">Submitted for Approval</span>
  <span class="t" style="top:176.30px;font-size:12px;line-height:16px;color:#3e3e3c;left:533.78px;transform:scaleX(1.1174);">17/08/2020, 13:30</span>
</section>
</body>
</html>
